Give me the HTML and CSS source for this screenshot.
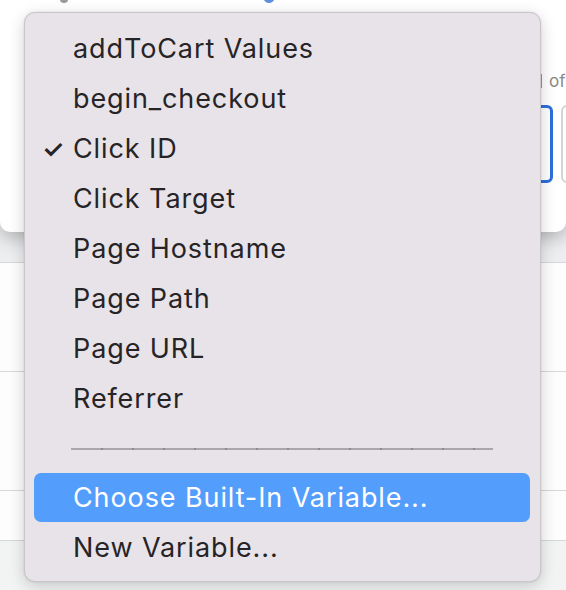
FILE: index.html
```html
<!DOCTYPE html>
<html>
<head>
<meta charset="utf-8">
<link rel="stylesheet" href="styles.css">
</head>
<body>
<div class="page">
  <div class="dialog">
    <div class="dialog-top">
      <span class="frag-gray"></span>
      <span class="frag-blue"></span>
    </div>
    <div class="dialog-side">
      <div class="side-label"><span class="bar"></span><span>of</span></div>
      <div class="side-fields">
        <div class="field focused"></div>
        <div class="field"></div>
      </div>
    </div>
  </div>
  <div class="rows">
    <div class="row r1"></div>
    <div class="row r2"></div>
    <div class="row r3"></div>
    <div class="row r4"></div>
  </div>
</div>

<div class="menu">
  <div class="item">addToCart Values</div>
  <div class="item">begin_checkout</div>
  <div class="item checked"><span class="check">✓</span>Click ID</div>
  <div class="item">Click Target</div>
  <div class="item">Page Hostname</div>
  <div class="item">Page Path</div>
  <div class="item">Page URL</div>
  <div class="item">Referrer</div>
  <div class="sep"><div class="sep-line"></div></div>
  <div class="item active">Choose Built-In Variable...</div>
  <div class="item">New Variable...</div>
</div>
</body>
</html>
```
FILE: styles.css
```css
html, body {
  margin: 0;
  padding: 0;
}
body {
  width: 566px;
  height: 590px;
  overflow: hidden;
  background: #eceeef;
  font-family: "Inter", "Noto Sans", sans-serif;
  position: relative;
}
.page {
  display: flex;
  flex-direction: column;
}
.dialog {
  height: 232px;
  background: #ffffff;
  border-radius: 0 0 10px 10px;
  box-shadow: 0 6px 18px rgba(0,0,0,0.25);
  position: relative;
  z-index: 1;
  display: flex;
  flex-direction: column;
}
.dialog-top {
  height: 12px;
  position: relative;
}
.frag-gray {
  position: absolute;
  left: 60px;
  top: -4px;
  width: 8px;
  height: 7px;
  border-radius: 50%;
  background: #9a9a9a;
}
.frag-blue {
  position: absolute;
  left: 264px;
  top: -5px;
  width: 10px;
  height: 8px;
  border-radius: 50%;
  background: #5c8fe0;
}
.dialog-side {
  display: flex;
  flex-direction: column;
  padding-top: 60px;
}
.side-label {
  display: flex;
  align-items: center;
  gap: 7px;
  padding-left: 540px;
  font-size: 17px;
  color: #8a8a8a;
  height: 18px;
  line-height: 18px;
  white-space: nowrap;
}
.bar {
  width: 2px;
  height: 14px;
  background: #9a9a9a;
  flex-shrink: 0;
}
.side-fields {
  display: flex;
  gap: 8px;
  margin-top: 15px;
  padding-left: 470px;
}
.field {
  width: 60px;
  height: 74px;
  border: 2px solid #d4d4d4;
  border-radius: 6px;
  flex-shrink: 0;
}
.field.focused {
  width: 77px;
  height: 72px;
  border: 3px solid #2d6fdc;
}
.rows {
  display: flex;
  flex-direction: column;
  padding-top: 30px;
}
.row {
  background: #fdfdfd;
  border-top: 1px solid #d5d7d8;
}
.r1 { height: 108px; }
.r2 { height: 118px; }
.r3 { height: 49px; }
.r4 { height: 52px; background: #f2f3f3; }

.menu {
  position: absolute;
  left: 24px;
  top: 12px;
  width: 496px;
  padding: 11px 10px 8px 9px;
  background: #e8e3e8;
  border: 1px solid #c9c5c9;
  border-radius: 11px;
  box-shadow: 0 4px 16px rgba(0,0,0,0.18), 0 0 2px rgba(0,0,0,0.12);
  z-index: 5;
  display: flex;
  flex-direction: column;
}
.item {
  height: 50px;
  line-height: 50px;
  padding-left: 39px;
  font-size: 27px;
  letter-spacing: 0.9px;
  color: #262426;
  border-radius: 7px;
  position: relative;
  white-space: nowrap;
}
.check {
  position: absolute;
  left: 8px;
  top: 0;
  font-size: 25px;
  font-weight: 600;
  letter-spacing: 0;
  color: #262426;
}
.item.active {
  background: #539dfc;
  color: #ffffff;
  height: 49px;
  line-height: 49px;
  margin-bottom: 1px;
}
.sep {
  height: 49px;
  display: flex;
  align-items: center;
  padding-left: 37px;
  padding-right: 37px;
}
.sep-line {
  flex: 1;
  height: 2px;
  background:
    repeating-linear-gradient(to right, transparent 0 29px, #8e8a8e 29px 31px),
    #aaa6aa;
  background-position: 1px 0, 0 0;
}
```
